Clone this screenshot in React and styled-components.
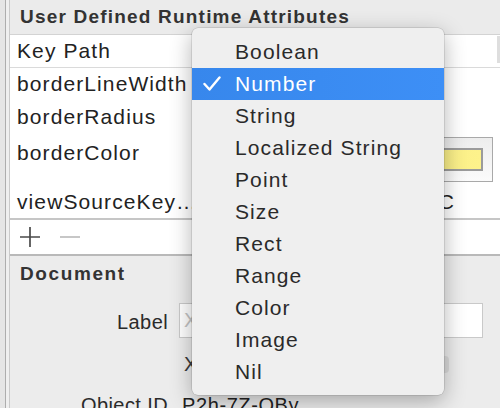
import React from 'react';
import styled, { createGlobalStyle } from 'styled-components';

const GlobalStyle = createGlobalStyle`
  html, body, #root {
    margin: 0;
    height: 408px;
  }
  body {
    background: #ececec;
    font-family: "Liberation Sans", Arial, Helvetica, sans-serif;
    color: #262626;
    overflow: hidden;
  }
`;

const Page = styled.div`
  position: relative;
  display: flex;
  width: 500px;
  height: 408px;
  overflow: hidden;
`;

const Gutter = styled.div`
  flex: 0 0 10px;
  background: linear-gradient(
    to right,
    #e5e5e5 0 5px,
    #adadad 5px 6px,
    #efefef 6px 9px,
    #cacaca 9px 10px
  );
`;

const Panel = styled.div`
  flex: 1;
  display: flex;
  flex-direction: column;
  min-width: 0;
  overflow: hidden;
`;

const SectionTitle = styled.div`
  flex-shrink: 0;
  height: 34px;
  line-height: 34px;
  padding-left: 10px;
  background: #ebebeb;
  border-bottom: 1px solid #d3d3d3;
  font-weight: bold;
  font-size: 19px;
  letter-spacing: 1.2px;
  color: #333;
  white-space: nowrap;
`;

const Table = styled.div`
  flex-shrink: 0;
  background: #fff;
`;

const Row = styled.div`
  display: grid;
  grid-template-columns: 182px 1fr 170px;
  height: ${(p) => p.$h}px;
  border-bottom: ${(p) => (p.$line ? '1px solid #dadada' : 'none')};
`;

const KeyCell = styled.div`
  padding-left: 7px;
  font-size: 21px;
  letter-spacing: 1.1px;
  line-height: ${(p) => p.$lh}px;
  white-space: nowrap;
  color: #222;
`;

const ValueCell = styled.div`
  display: flex;
  align-items: ${(p) => (p.$center ? 'center' : 'flex-start')};
  justify-content: flex-end;
  padding-right: ${(p) => p.$pr}px;
  font-size: 21px;
  letter-spacing: 1.1px;
  line-height: ${(p) => p.$lh}px;
  color: #222;
  white-space: nowrap;
  overflow: hidden;
`;

const HeaderDivider = styled.div`
  justify-self: end;
  width: 3px;
  margin: 1px 0 4px;
  background: #dedede;
`;

const ColorWell = styled.div`
  box-sizing: border-box;
  width: 140px;
  height: 45px;
  padding: 10px 9px;
  border: 1.5px solid #a9a9a9;
  background: linear-gradient(#ededed, #fbfbfb);
`;

const Swatch = styled.div`
  height: 100%;
  box-sizing: border-box;
  border: 2px solid #9b9b9b;
  background: ${(p) => p.$color};
`;

const Toolbar = styled.div`
  flex-shrink: 0;
  display: flex;
  align-items: center;
  gap: 18px;
  height: 34px;
  padding-left: 9px;
  background: #fff;
  border-top: 2px solid #c6c6c6;
  border-bottom: 2px solid #b9b9b9;
`;

const ToolIcon = styled.svg`
  width: 22px;
  height: 22px;
  stroke: ${(p) => (p.$disabled ? '#bdbdbd' : '#4a4a4a')};
  stroke-width: 1.7;
  fill: none;
`;

const Document = styled.div`
  flex: 1 0 auto;
  background: #ececec;
  padding: 7px 17px 0 10px;
`;

const DocTitle = styled.div`
  font-weight: bold;
  font-size: 19px;
  letter-spacing: 1.6px;
  line-height: 22px;
  color: #333;
`;

const FormGrid = styled.div`
  display: grid;
  grid-template-columns: 148px 1fr;
  column-gap: 11px;
  margin-top: ${(p) => p.$mt}px;
  align-items: center;
`;

const FieldLabel = styled.div`
  text-align: right;
  font-size: 20px;
  letter-spacing: 0.4px;
  line-height: 24px;
  padding-top: ${(p) => p.$pt || 0}px;
  color: #2a2a2a;
`;

const TextField = styled.div`
  height: 35px;
  box-sizing: border-box;
  border: 1px solid #c9c9c9;
  background: #fff;
  padding-left: 4px;
  font-size: 20px;
  line-height: 33px;
  color: #c4c4c4;
  white-space: nowrap;
  overflow: hidden;
`;

const LabelColors = styled.div`
  display: flex;
  align-items: center;
  gap: 10px;
  height: 17px;
  padding-left: 5px;
  padding-right: 34px;
`;

const NoColor = styled.span`
  font-size: 20px;
  line-height: 17px;
  color: #3a3a3a;
`;

const ColorDot = styled.div`
  width: 22px;
  height: 17px;
  border-radius: 4px;
  background: ${(p) => p.$color};
  margin-left: ${(p) => (p.$push ? 'auto' : '0')};
`;

const IdValue = styled.div`
  font-size: 20px;
  letter-spacing: 0.6px;
  line-height: 24px;
  padding-left: 3px;
  color: #222;
`;

const Menu = styled.div`
  position: absolute;
  left: 192px;
  top: 28px;
  width: 252px;
  padding: 8px 0 7px;
  background: #efefef;
  border-radius: 6px;
  box-shadow: 0 0 0 0.5px rgba(0, 0, 0, 0.18), 0 6px 22px rgba(0, 0, 0, 0.3);
`;

const MenuItem = styled.div`
  position: relative;
  height: 32px;
  line-height: 32px;
  padding-left: 43px;
  font-size: 21px;
  letter-spacing: 1.1px;
  color: ${(p) => (p.$active ? '#fff' : '#2a2a2a')};
  background: ${(p) => (p.$active ? 'linear-gradient(to right, #3787ec, #3d8ff6)' : 'transparent')};
`;

const Check = styled.svg`
  position: absolute;
  left: 11px;
  top: 8px;
  width: 18px;
  height: 15px;
  fill: none;
  stroke: #fff;
  stroke-width: 2.4;
  stroke-linecap: round;
  stroke-linejoin: round;
`;

const types = [
  'Boolean',
  'Number',
  'String',
  'Localized String',
  'Point',
  'Size',
  'Rect',
  'Range',
  'Color',
  'Image',
  'Nil',
];

export default function App() {
  return (
    <>
      <GlobalStyle />
      <Page>
        <Gutter />
        <Panel>
          <SectionTitle>User Defined Runtime Attributes</SectionTitle>

          <Table>
            <Row $h={32} $line>
              <KeyCell $lh={32}>Key Path</KeyCell>
              <div />
              <HeaderDivider />
            </Row>
            <Row $h={32}>
              <KeyCell $lh={32}>borderLineWidth</KeyCell>
            </Row>
            <Row $h={33}>
              <KeyCell $lh={33}>borderRadius</KeyCell>
            </Row>
            <Row $h={52}>
              <KeyCell $lh={40}>borderColor</KeyCell>
              <div />
              <ValueCell $center $pr={7}>
                <ColorWell>
                  <Swatch $color="linear-gradient(to right, #f6eb86, #fdf28b)" />
                </ColorWell>
              </ValueCell>
            </Row>
            <Row $h={33}>
              <KeyCell $lh={33}>viewSourceKey…</KeyCell>
              <div />
              <ValueCell $lh={33} $pr={45}>SRC</ValueCell>
            </Row>
          </Table>

          <Toolbar>
            <ToolIcon viewBox="0 0 22 22">
              <path d="M11 1v20M1 11h20" />
            </ToolIcon>
            <ToolIcon viewBox="0 0 22 22" $disabled>
              <path d="M1 11h20" />
            </ToolIcon>
          </Toolbar>

          <Document>
            <DocTitle>Document</DocTitle>
            <FormGrid $mt={18}>
              <FieldLabel $pt={3}>Label</FieldLabel>
              <TextField>Xcode Specific Label</TextField>
            </FormGrid>
            <FormGrid $mt={18}>
              <div />
              <LabelColors>
                <NoColor>X</NoColor>
                <ColorDot $color="#f26b6b" />
                <ColorDot $color="#f5a34b" />
                <ColorDot $color="#f4dc4e" />
                <ColorDot $color="#8fd45a" />
                <ColorDot $color="#5aa6ef" />
                <ColorDot $color="#b985e0" />
                <ColorDot $color="#dadada" $push />
              </LabelColors>
            </FormGrid>
            <FormGrid $mt={20}>
              <FieldLabel>Object ID</FieldLabel>
              <IdValue>P2h-7Z-QBy</IdValue>
            </FormGrid>
          </Document>
        </Panel>

        <Menu>
          {types.map((t) => (
            <MenuItem key={t} $active={t === 'Number'}>
              {t === 'Number' && (
                <Check viewBox="0 0 18 15">
                  <path d="M1.5 8l5 5.5L16.5 1.5" />
                </Check>
              )}
              {t}
            </MenuItem>
          ))}
        </Menu>
      </Page>
    </>
  );
}
